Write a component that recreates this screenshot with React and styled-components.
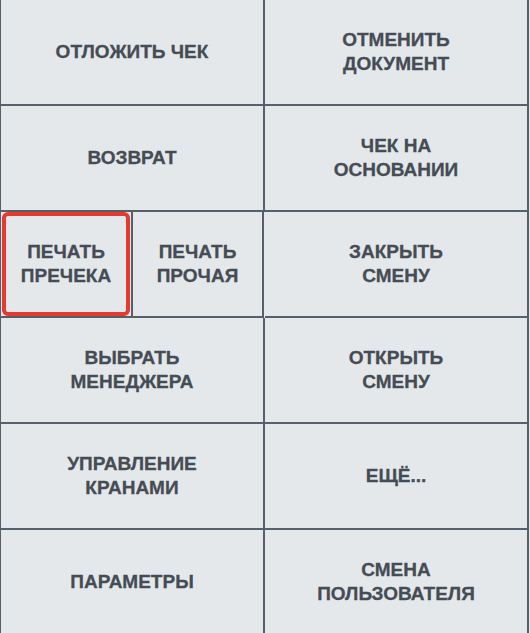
import React from "react";
import styled, { createGlobalStyle } from "styled-components";

const GlobalStyle = createGlobalStyle`
    html, body {
        margin: 0;
        padding: 0;
        background: #e4e8eb;
        overflow: hidden;
    }
`;

const Grid = styled.div`
    display: grid;
    grid-template-columns: 264px 264px;
    grid-auto-rows: 106px;
    width: 529px;
    border-left: 1px solid #56606a;
    box-sizing: border-box;
`;

const Cell = styled.button`
    position: relative;
    display: flex;
    align-items: center;
    justify-content: center;
    margin: 0;
    padding: 0 8px;
    box-sizing: border-box;
    background: #e4e8eb;
    border: none;
    border-right: 2px solid #56606a;
    border-bottom: 2px solid #56606a;
    font-family: "Liberation Sans", Arial, sans-serif;
    font-weight: bold;
    font-size: 19px;
    line-height: 24px;
    color: #464c54;
    -webkit-text-stroke: 0.3px #464c54;
    text-transform: uppercase;
    text-align: center;
    cursor: pointer;

    &::after {
        content: "";
        display: ${(p) => (p.$selected ? "block" : "none")};
        position: absolute;
        top: 0;
        bottom: 0;
        left: 1px;
        right: 1px;
        border: 4px solid #e53a30;
        border-radius: 6px;
        pointer-events: none;
    }
`;

const Split = styled.div`
    display: grid;
    grid-template-columns: 132px 131px;
`;

const Label = styled.span`
    display: block;
`;

const Text = ({ lines }) => (
    <Label>
        {lines.map((l, i) => (
            <React.Fragment key={i}>
                {i > 0 && <br />}
                {l}
            </React.Fragment>
        ))}
    </Label>
);

const App = () => {
    return (
        <>
            <GlobalStyle />
            <Grid>
                <Cell>
                    <Text lines={["Отложить чек"]} />
                </Cell>
                <Cell>
                    <Text lines={["Отменить", "документ"]} />
                </Cell>
                <Cell>
                    <Text lines={["Возврат"]} />
                </Cell>
                <Cell>
                    <Text lines={["Чек на", "основании"]} />
                </Cell>
                <Split>
                    <Cell $selected>
                        <Text lines={["Печать", "пречека"]} />
                    </Cell>
                    <Cell>
                        <Text lines={["Печать", "прочая"]} />
                    </Cell>
                </Split>
                <Cell>
                    <Text lines={["Закрыть", "смену"]} />
                </Cell>
                <Cell>
                    <Text lines={["Выбрать", "менеджера"]} />
                </Cell>
                <Cell>
                    <Text lines={["Открыть", "смену"]} />
                </Cell>
                <Cell>
                    <Text lines={["Управление", "кранами"]} />
                </Cell>
                <Cell>
                    <Text lines={["Ещё..."]} />
                </Cell>
                <Cell>
                    <Text lines={["Параметры"]} />
                </Cell>
                <Cell>
                    <Text lines={["Смена", "пользователя"]} />
                </Cell>
            </Grid>
        </>
    );
};

export default App;
